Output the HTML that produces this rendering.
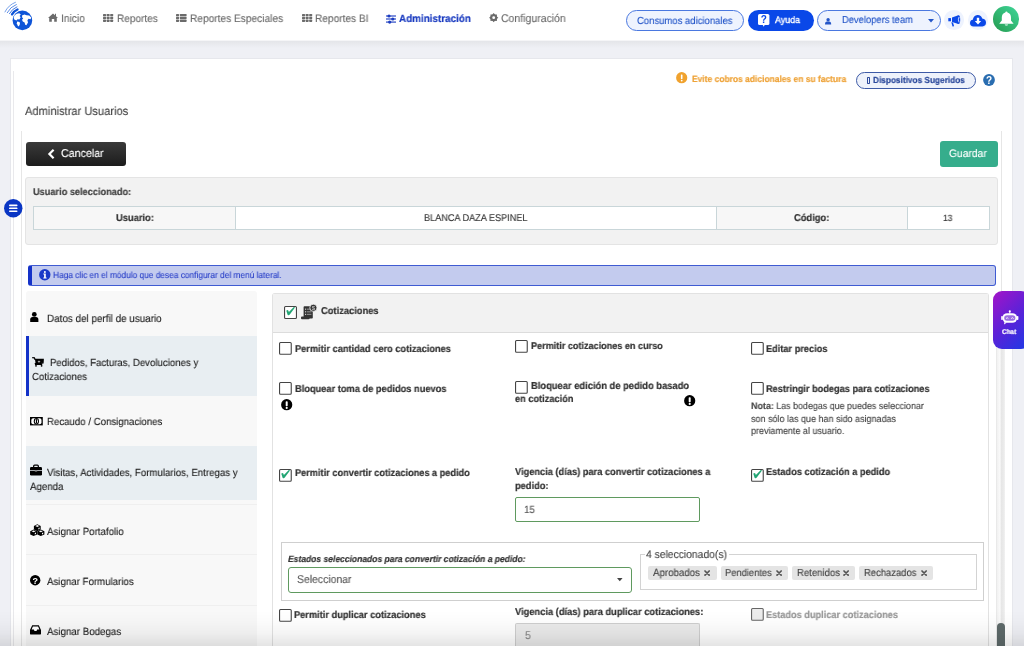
<!DOCTYPE html>
<html><head><meta charset="utf-8"><title>Administrar Usuarios</title>
<style>
html,body{margin:0;padding:0;}
body{width:1024px;height:646px;overflow:hidden;position:relative;background:#eff0f5;font-family:"Liberation Sans",sans-serif;}
.b{position:absolute;display:block;}
svg.b{will-change:transform;overflow:visible;}
.t{position:absolute;white-space:nowrap;line-height:1;transform-origin:0 0;text-rendering:geometricPrecision;will-change:transform;}
</style></head><body>
<div class="b" style="left:0px;top:0px;width:1024px;height:40px;background:#fff;"></div>
<div class="b" style="left:0px;top:40px;width:1024px;height:1px;background:#f5f5f7;"></div>
<div class="b" style="left:0px;top:41px;width:1024px;height:7px;background:linear-gradient(#e4e5e9,#eff0f5);"></div>
<svg class="b" style="left:2px;top:1px;" width="34" height="32" viewBox="0 0 34 32">
<circle cx="20.4" cy="19.4" r="9.8" fill="#0f55d8"/>
<path d="M12.4 14.6 L14.6 12.8 L17.2 12.2 L18.8 13.4 L17.6 15 L18.6 16.2 L17.4 18.4 L15.6 18.2 L14.4 19.6 L12.2 18.4 L11.6 16.4z" fill="#fff"/>
<path d="M15.2 20.6 L17.6 21 L18 23 L16.8 25.6 L15.6 24.4 L14.8 22.2z" fill="#fff"/>
<path d="M20 14.4 L22.4 13.4 L24.6 14.2 L27.2 14.4 L29.2 16.4 L28.6 18.2 L26.6 17.8 L25.4 19.2 L26 21.6 L24.4 24.2 L23.2 23.8 L22.6 21.4 L20.8 20.6 L20 18.8 L21.2 17.4 L20.2 16.4z" fill="#fff"/>
<path d="M10.01 13.40 A 12 12 0 0 1 15.52 8.44" stroke="#0f55d8" stroke-width="2.3" fill="none" stroke-linecap="round"/>
<path d="M7.51 12.55 A 14.6 14.6 0 0 1 14.93 5.86" stroke="#2a68dc" stroke-width="0.9" fill="none" stroke-linecap="round"/>
<path d="M5.25 11.68 A 17 17 0 0 1 14.31 3.53" stroke="#4a80e2" stroke-width="0.9" fill="none" stroke-linecap="round"/>
<path d="M2.96 10.90 A 19.4 19.4 0 0 1 13.45 1.29" stroke="#6a98e8" stroke-width="0.9" fill="none" stroke-linecap="round"/>
</svg>
<svg class="b" style="left:48px;top:13px;" width="10" height="9" viewBox="0 0 10 9"><path d="M5 0.6 L0 5 L1.2 5 L1.2 8.8 L3.8 8.8 L3.8 6 L6.2 6 L6.2 8.8 L8.8 8.8 L8.8 5 L10 5 L8 3.2 L8 0.8 L7 0.8 L7 2.3 Z" fill="#6b6b6b"/></svg>
<svg class="b" style="left:102.8px;top:13.8px;" width="11" height="8.2" viewBox="0 0 11 8.2"><rect x="0.0" y="0.0" width="3" height="2.3" rx="0.6" fill="#6b6b6b"/><rect x="3.6" y="0.0" width="3" height="2.3" rx="0.6" fill="#6b6b6b"/><rect x="7.2" y="0.0" width="3" height="2.3" rx="0.6" fill="#6b6b6b"/><rect x="0.0" y="2.8" width="3" height="2.3" rx="0.6" fill="#6b6b6b"/><rect x="3.6" y="2.8" width="3" height="2.3" rx="0.6" fill="#6b6b6b"/><rect x="7.2" y="2.8" width="3" height="2.3" rx="0.6" fill="#6b6b6b"/><rect x="0.0" y="5.6" width="3" height="2.3" rx="0.6" fill="#6b6b6b"/><rect x="3.6" y="5.6" width="3" height="2.3" rx="0.6" fill="#6b6b6b"/><rect x="7.2" y="5.6" width="3" height="2.3" rx="0.6" fill="#6b6b6b"/></svg>
<svg class="b" style="left:301.6px;top:13.8px;" width="11" height="8.2" viewBox="0 0 11 8.2"><rect x="0.0" y="0.0" width="3" height="2.3" rx="0.6" fill="#6b6b6b"/><rect x="3.6" y="0.0" width="3" height="2.3" rx="0.6" fill="#6b6b6b"/><rect x="7.2" y="0.0" width="3" height="2.3" rx="0.6" fill="#6b6b6b"/><rect x="0.0" y="2.8" width="3" height="2.3" rx="0.6" fill="#6b6b6b"/><rect x="3.6" y="2.8" width="3" height="2.3" rx="0.6" fill="#6b6b6b"/><rect x="7.2" y="2.8" width="3" height="2.3" rx="0.6" fill="#6b6b6b"/><rect x="0.0" y="5.6" width="3" height="2.3" rx="0.6" fill="#6b6b6b"/><rect x="3.6" y="5.6" width="3" height="2.3" rx="0.6" fill="#6b6b6b"/><rect x="7.2" y="5.6" width="3" height="2.3" rx="0.6" fill="#6b6b6b"/></svg>
<svg class="b" style="left:176px;top:13.8px;" width="11" height="8.2" viewBox="0 0 11 8.2"><rect x="0" y="0.0" width="3" height="2.3" rx="0.6" fill="#6b6b6b"/><rect x="3.8" y="0.0" width="6.8" height="2.3" rx="0.6" fill="#6b6b6b"/><rect x="0" y="2.8" width="3" height="2.3" rx="0.6" fill="#6b6b6b"/><rect x="3.8" y="2.8" width="6.8" height="2.3" rx="0.6" fill="#6b6b6b"/><rect x="0" y="5.6" width="3" height="2.3" rx="0.6" fill="#6b6b6b"/><rect x="3.8" y="5.6" width="6.8" height="2.3" rx="0.6" fill="#6b6b6b"/></svg>
<svg class="b" style="left:386px;top:14px;" width="10" height="10" viewBox="0 0 10 10">
<rect x="0" y="1.3" width="10" height="1.4" fill="#1b3cc0" opacity="0.8"/><circle cx="3" cy="2" r="1.6" fill="#1b3cc0"/>
<rect x="0" y="4.3" width="10" height="1.4" fill="#1b3cc0" opacity="0.8"/><circle cx="6.8" cy="5" r="1.6" fill="#1b3cc0"/>
<rect x="0" y="7.4" width="10" height="1.4" fill="#1b3cc0" opacity="0.8"/><circle cx="3.7" cy="8.1" r="1.6" fill="#1b3cc0"/>
</svg>
<svg class="b" style="left:488.6px;top:13.3px;" width="9.4" height="9.4" viewBox="0 0 9.4 9.4"><polygon points="4.70,0.10 6.00,1.56 7.95,1.45 7.84,3.40 9.30,4.70 7.84,6.00 7.95,7.95 6.00,7.84 4.70,9.30 3.40,7.84 1.45,7.95 1.56,6.00 0.10,4.70 1.56,3.40 1.45,1.45 3.40,1.56" fill="#6b6b6b"/><circle cx="4.7" cy="4.7" r="3.3" fill="#6b6b6b"/><circle cx="4.7" cy="4.7" r="1.4" fill="#fff"/></svg>
<div class="t" style="left:60.52px;top:14.00px;font-size:10.99px;color:#6b6b6b;transform:scaleX(0.9346);-webkit-text-stroke:0.12px #6b6b6b;">Inicio</div>
<div class="t" style="left:116.63px;top:14.00px;font-size:10.77px;color:#6b6b6b;transform:scaleX(0.9346);-webkit-text-stroke:0.12px #6b6b6b;">Reportes</div>
<div class="t" style="left:189.62px;top:14.00px;font-size:10.87px;color:#6b6b6b;transform:scaleX(0.9346);-webkit-text-stroke:0.12px #6b6b6b;">Reportes Especiales</div>
<div class="t" style="left:315.42px;top:14.00px;font-size:10.85px;color:#6b6b6b;transform:scaleX(0.9346);-webkit-text-stroke:0.12px #6b6b6b;">Reportes BI</div>
<div class="t" style="left:398.64px;top:14.00px;font-size:10.57px;color:#1b3cc0;transform:scaleX(0.9346);font-weight:700;-webkit-text-stroke:0.2px #1b3cc0;">Administración</div>
<div class="t" style="left:500.65px;top:14.00px;font-size:11.24px;color:#6b6b6b;transform:scaleX(0.9346);-webkit-text-stroke:0.12px #6b6b6b;">Configuración</div>
<div class="b" style="left:626px;top:10px;width:117.5px;height:21px;border:1px solid #4a78e0;background:#eef3fe;border-radius:11px;box-sizing:border-box;"></div>
<div class="t" style="left:636.69px;top:17.00px;font-size:10.16px;color:#2456c8;transform:scaleX(0.9346);-webkit-text-stroke:0.12px #2456c8;">Consumos adicionales</div>
<div class="b" style="left:748px;top:9.8px;width:66px;height:20.8px;background:#0a48e8;border-radius:11px;"></div>
<svg class="b" style="left:758px;top:14px;" width="11.5" height="13" viewBox="0 0 11.5 13"><rect x="0" y="0" width="11.4" height="11" rx="1.6" fill="#fff"/><path d="M4.6 10.8 L5.7 12.8 L6.8 10.8z" fill="#fff"/><text x="5.7" y="9" font-family="Liberation Sans" font-weight="700" font-size="10" text-anchor="middle" fill="#0a48e8">?</text></svg>
<div class="t" style="left:774.60px;top:16.00px;font-size:9.47px;color:#fff;transform:scaleX(0.9346);-webkit-text-stroke:0.12px #fff;-webkit-text-stroke:0.35px #fff;">Ayuda</div>
<div class="b" style="left:817.3px;top:9.5px;width:124.20000000000005px;height:21.5px;border:1px solid #4a78e0;background:#eef3fe;border-radius:11px;box-sizing:border-box;"></div>
<svg class="b" style="left:825px;top:17.5px;" width="6.2" height="6.4" viewBox="0 0 6.2 6.4"><circle cx="3.1" cy="1.7" r="1.7" fill="#2456c8"/><path d="M0 6.4 Q0 3.6 2 3.6 L4.2 3.6 Q6.2 3.6 6.2 6.4z" fill="#2456c8"/></svg>
<div class="t" style="left:842.07px;top:16.00px;font-size:10.04px;color:#2456c8;transform:scaleX(0.9346);-webkit-text-stroke:0.12px #2456c8;">Developers team</div>
<svg class="b" style="left:928px;top:19px;" width="6" height="4" viewBox="0 0 6 4"><path d="M0 0 L6 0 L3 3.4z" fill="#2456c8"/></svg>
<div class="b" style="left:944.2px;top:10.2px;width:19.59999999999991px;height:19.6px;background:#eef3fe;border-radius:50%;"></div>
<svg class="b" style="left:947.8px;top:14.6px;" width="12.4" height="11.6" viewBox="0 0 12.4 11.6"><rect x="0.3" y="3.1" width="2.7" height="3.2" fill="#0a48e8"/><path d="M4 2.6 L10.4 0.3 L10.4 9.1 L4 6.9z" fill="#0a48e8"/><ellipse cx="10.6" cy="4.7" rx="1.6" ry="4.4" fill="#0a48e8"/><path d="M11.1 2 Q9.7 4.7 11.1 7.4" stroke="#fff" stroke-width="0.8" fill="none"/><path d="M3.3 7.3 L5 7.6 L6.1 11.2 L4.5 11.4z" fill="#0a48e8"/></svg>
<div class="b" style="left:967.8px;top:9.8px;width:20.600000000000023px;height:20.599999999999998px;background:#eef3fe;border-radius:50%;"></div>
<svg class="b" style="left:970.4px;top:13.6px;" width="16" height="12.6" viewBox="0 0 16 12.6"><path d="M3.6 12.4 Q0 12.4 0 9 Q0 6.2 2.8 5.8 Q3.4 1.6 7.4 1 Q11.2 0.8 12.2 4.6 Q16 5 16 8.6 Q16 12.4 12.4 12.4z" fill="#0a48e8"/><path d="M6.8 3.8 L9.2 3.8 L9.2 7 L11.2 7 L8 10.6 L4.8 7 L6.8 7z" fill="#fff"/></svg>
<div class="b" style="left:992.5px;top:6px;width:26.700000000000045px;height:26px;background:linear-gradient(45deg,#259a4e,#3fd79a);border-radius:50%;"></div>
<svg class="b" style="left:998.6px;top:10.8px;" width="14.8" height="15.6" viewBox="0 0 14.8 15.6"><path d="M7.4 0.4 Q8.5 0.4 8.5 1.5 Q12 2.4 12 6.6 L12 9.6 L14.6 12.8 L0.2 12.8 L2.8 9.6 L2.8 6.6 Q2.8 2.4 6.3 1.5 Q6.3 0.4 7.4 0.4z" fill="#fff"/><path d="M5.6 13.4 Q7.4 15.8 9.2 13.4z" fill="#fff"/></svg>
<div class="b" style="left:10px;top:58px;width:1003px;height:588px;background:#fff;border:1px solid #e6e7ec;box-sizing:border-box;border-bottom:none;"></div>
<div class="b" style="left:13px;top:71px;width:1px;height:575px;background:#e9e9ec;"></div>
<div class="b" style="left:21px;top:131px;width:1px;height:515px;background:#e6e6e6;"></div>
<div class="b" style="left:1001px;top:131px;width:1px;height:515px;background:#e6e6e6;"></div>
<svg class="b" style="left:676px;top:72px;" width="11.4" height="11.4" viewBox="0 0 11.4 11.4"><circle cx="5.7" cy="5.7" r="5.6" fill="#f0a22e"/><rect x="4.9" y="2.4" width="1.6" height="4.6" rx="0.6" fill="#fff"/><circle cx="5.7" cy="8.6" r="0.9" fill="#fff"/></svg>
<div class="t" style="left:692.27px;top:75.00px;font-size:9.06px;color:#eea236;transform:scaleX(0.9346);font-weight:700;-webkit-text-stroke:0.2px #eea236;">Evite cobros adicionales en su factura</div>
<div class="b" style="left:856px;top:72px;width:120px;height:17.400000000000006px;border:1px solid #3d5aa6;background:#eef2fb;border-radius:9px;box-sizing:border-box;"></div>
<div class="b" style="left:866.5px;top:77px;width:3.5px;height:6.599999999999994px;border:0.9px solid #2c4a9c;border-radius:0.8px;box-sizing:border-box;"></div>
<div class="t" style="left:872.59px;top:76.00px;font-size:8.85px;color:#2c4a9c;transform:scaleX(0.9346);font-weight:700;-webkit-text-stroke:0.2px #2c4a9c;">Dispositivos Sugeridos</div>
<svg class="b" style="left:982.8px;top:74.2px;" width="12" height="12" viewBox="0 0 12 12"><circle cx="6" cy="6" r="5.9" fill="#2a6db0"/><text x="6" y="9.6" font-family="Liberation Sans" font-weight="700" font-size="10" text-anchor="middle" fill="#fff">?</text></svg>
<div class="t" style="left:24.73px;top:106.00px;font-size:11.91px;color:#444;transform:scaleX(0.9346);-webkit-text-stroke:0.12px #444;">Administrar Usuarios</div>
<div class="b" style="left:25.5px;top:142px;width:100.0px;height:24px;background:linear-gradient(#3a3a3a,#1c1c1c);border-radius:3px;"></div>
<svg class="b" style="left:47.5px;top:149px;" width="7" height="10" viewBox="0 0 7 10"><path d="M5.6 0.8 L1.4 5 L5.6 9.2" stroke="#fff" stroke-width="2.2" fill="none"/></svg>
<div class="t" style="left:61.35px;top:149.00px;font-size:11.41px;color:#fff;transform:scaleX(0.9346);-webkit-text-stroke:0.12px #fff;">Cancelar</div>
<div class="b" style="left:940px;top:141px;width:58px;height:26px;background:#36ad8c;border-radius:3px;"></div>
<div class="t" style="left:949.36px;top:149.00px;font-size:11.02px;color:#fff;transform:scaleX(0.9346);-webkit-text-stroke:0.12px #fff;">Guardar</div>
<div class="b" style="left:25px;top:177px;width:973px;height:68px;background:#f2f2f2;border:1px solid #e4e4e4;border-radius:3px;box-sizing:border-box;"></div>
<div class="t" style="left:33.14px;top:188.00px;font-size:9.86px;color:#444;transform:scaleX(0.9346);font-weight:700;-webkit-text-stroke:0.2px #444;">Usuario seleccionado:</div>
<div class="b" style="left:33px;top:206px;width:957px;height:24px;background:#fff;border:1px solid #c9d6d9;box-sizing:border-box;"></div>
<div class="b" style="left:34px;top:207px;width:201px;height:22px;background:#f7f7f7;"></div>
<div class="b" style="left:235px;top:207px;width:1px;height:22px;background:#c9d6d9;"></div>
<div class="b" style="left:717px;top:207px;width:190px;height:22px;background:#f7f7f7;"></div>
<div class="b" style="left:716px;top:207px;width:1px;height:22px;background:#c9d6d9;"></div>
<div class="b" style="left:907px;top:207px;width:1px;height:22px;background:#c9d6d9;"></div>
<div class="t" style="left:115.73px;top:214.00px;font-size:10.00px;color:#333;transform:scaleX(0.9346);font-weight:700;-webkit-text-stroke:0.2px #333;">Usuario:</div>
<div class="t" style="left:423.88px;top:214.00px;font-size:9.78px;color:#333;transform:scaleX(0.9346);-webkit-text-stroke:0.12px #333;">BLANCA DAZA ESPINEL</div>
<div class="t" style="left:794.00px;top:214.00px;font-size:9.99px;color:#333;transform:scaleX(0.9346);font-weight:700;-webkit-text-stroke:0.2px #333;">Código:</div>
<div class="t" style="left:942.85px;top:214.00px;font-size:9.04px;color:#333;transform:scaleX(0.9346);-webkit-text-stroke:0.12px #333;">13</div>
<svg class="b" style="left:4px;top:199px;" width="18.5" height="18.5" viewBox="0 0 18.5 18.5"><circle cx="9.25" cy="9.25" r="9.2" fill="#0a36c4"/><rect x="5" y="5.6" width="8.5" height="1.6" rx="0.7" fill="#fff"/><rect x="5" y="8.5" width="8.5" height="1.6" rx="0.7" fill="#fff"/><rect x="5" y="11.4" width="8.5" height="1.6" rx="0.7" fill="#fff"/></svg>
<div class="b" style="left:28px;top:265px;width:968px;height:21px;background:#c3cbee;border:1px solid #3f5bd2;border-left:4px solid #1532c8;border-radius:3px;box-sizing:border-box;"></div>
<svg class="b" style="left:38.8px;top:269.4px;" width="11.6" height="11.6" viewBox="0 0 11.6 11.6"><circle cx="5.8" cy="5.8" r="5.7" fill="#1a3ac8"/><circle cx="5.9" cy="2.9" r="1" fill="#fff"/><path d="M4.3 4.6 L6.8 4.6 L6.8 8.4 L7.6 8.4 L7.6 9.4 L4.3 9.4 L4.3 8.4 L5.1 8.4 L5.1 5.6 L4.3 5.6z" fill="#fff"/></svg>
<div class="t" style="left:52.68px;top:271.00px;font-size:8.92px;color:#2a40c8;transform:scaleX(0.9346);-webkit-text-stroke:0.12px #2a40c8;">Haga clic en el módulo que desea configurar del menú lateral.</div>
<div class="b" style="left:25.8px;top:291px;width:231.2px;height:355px;background:#f8f8f8;border-radius:3px 3px 0 0;"></div>
<div class="b" style="left:25.8px;top:336px;width:231.2px;height:60px;background:#e8eef2;"></div>
<div class="b" style="left:26px;top:336px;width:3px;height:60px;background:#1432c8;"></div>
<div class="b" style="left:25.8px;top:446px;width:231.2px;height:53.5px;background:#e8eef2;"></div>
<div class="b" style="left:25.8px;top:503.5px;width:231.2px;height:1.0px;background:#efefef;"></div>
<div class="b" style="left:25.8px;top:554px;width:231.2px;height:1px;background:#efefef;"></div>
<div class="b" style="left:25.8px;top:605px;width:231.2px;height:1px;background:#efefef;"></div>
<svg class="b" style="left:30px;top:311.8px;" width="8.6" height="10" viewBox="0 0 8.6 10"><circle cx="4.3" cy="2.4" r="2.4" fill="#000"/><path d="M0.2 10 L0.2 7.6 Q0.2 5 2.6 5 L6 5 Q8.4 5 8.4 7.6 L8.4 10z" fill="#000"/></svg>
<div class="t" style="left:47.24px;top:314.00px;font-size:10.57px;color:#1c1c1c;transform:scaleX(0.9346);-webkit-text-stroke:0.12px #1c1c1c;">Datos del perfil de usuario</div>
<svg class="b" style="left:32.3px;top:357px;" width="11.4" height="9.6" viewBox="0 0 11.4 9.6"><path d="M0.2 0.6 L2.4 0.8 L3 2.4 L11.2 2.4 L11 5.8 L3.4 6.6 L3.6 7.4 L10.2 7.4" stroke="#000" stroke-width="1.3" fill="none"/><path d="M3 2.4 L11.2 2.4 L11 5.8 L3.6 6.6z" fill="#000"/><circle cx="4" cy="8.8" r="0.9" fill="#000"/><circle cx="9.6" cy="8.8" r="0.9" fill="#000"/><path d="M7 3.2 L7.5 4.4 L8.7 4.6 L7.5 4.9 L7 6 L6.5 4.9 L5.3 4.6 L6.5 4.4z" fill="#fff"/></svg>
<div class="t" style="left:49.66px;top:359.00px;font-size:10.30px;color:#1c1c1c;transform:scaleX(0.9346);-webkit-text-stroke:0.12px #1c1c1c;">Pedidos, Facturas, Devoluciones y</div>
<div class="t" style="left:32.38px;top:373.00px;font-size:10.30px;color:#1c1c1c;transform:scaleX(0.9346);-webkit-text-stroke:0.12px #1c1c1c;">Cotizaciones</div>
<svg class="b" style="left:30.1px;top:416.5px;" width="12.8" height="8.4" viewBox="0 0 12.8 8.4"><rect x="0" y="0" width="12.8" height="8.4" fill="#000"/><rect x="1.3" y="1.2" width="10.2" height="6" rx="1.8" fill="#fff"/><ellipse cx="6.4" cy="4.2" rx="2.6" ry="3.3" fill="#000"/><ellipse cx="6.4" cy="4.2" rx="1.5" ry="2.3" fill="#fff"/><rect x="5.9" y="2.2" width="1.1" height="4" fill="#000"/></svg>
<div class="t" style="left:47.05px;top:418.00px;font-size:10.34px;color:#1c1c1c;transform:scaleX(0.9346);-webkit-text-stroke:0.12px #1c1c1c;">Recaudo / Consignaciones</div>
<svg class="b" style="left:30.1px;top:465px;" width="12" height="10.4" viewBox="0 0 12 10.4"><rect x="3.6" y="0.2" width="4.8" height="2.4" rx="1" stroke="#000" stroke-width="1.2" fill="none"/><rect x="0" y="2" width="12" height="8.4" rx="1.2" fill="#000"/><rect x="0" y="5.2" width="12" height="0.7" fill="#e8eef2"/><rect x="4.8" y="5" width="2.4" height="1.6" fill="#888"/></svg>
<div class="t" style="left:47.46px;top:469.00px;font-size:10.35px;color:#1c1c1c;transform:scaleX(0.9346);-webkit-text-stroke:0.12px #1c1c1c;">Visitas, Actividades, Formularios, Entregas y</div>
<div class="t" style="left:29.94px;top:483.00px;font-size:10.39px;color:#1c1c1c;transform:scaleX(0.9346);-webkit-text-stroke:0.12px #1c1c1c;">Agenda</div>
<svg class="b" style="left:30.1px;top:523.6px;" width="14.6" height="12" viewBox="0 0 14.6 12"><path d="M3.9 1.9 L7.3 0.2 L10.7 1.9 L10.7 5.6 L7.3 7.3 L3.9 5.6z" fill="#000"/><path d="M0.2 7.2 L3.6 5.5 L7.2 7.2 L7.2 10.4 L3.6 12 L0.2 10.4z" fill="#000"/><path d="M7.3 7.2 L10.8 5.5 L14.4 7.2 L14.4 10.4 L10.8 12 L7.3 10.4z" fill="#000"/><path d="M5.3 2 L7.3 1.1 L9.3 2 L7.3 2.9z" fill="#fff"/><path d="M1.6 7.3 L3.6 6.4 L5.6 7.3 L3.6 8.2z" fill="#fff"/><path d="M8.8 7.3 L10.8 6.4 L12.8 7.3 L10.8 8.2z" fill="#fff"/><path d="M8.4 4 L9.6 3.5 L9.6 5 L8.4 5.5z" fill="#fff"/><path d="M4.8 9 L6 8.5 L6 10 L4.8 10.5z" fill="#fff"/><path d="M12 9 L13.2 8.5 L13.2 10 L12 10.5z" fill="#fff"/></svg>
<div class="t" style="left:47.43px;top:528.00px;font-size:10.41px;color:#1c1c1c;transform:scaleX(0.9346);-webkit-text-stroke:0.12px #1c1c1c;">Asignar Portafolio</div>
<svg class="b" style="left:30.1px;top:574.6px;" width="10.4" height="10.4" viewBox="0 0 10.4 10.4"><circle cx="5.2" cy="5.2" r="5.2" fill="#000"/><text x="5.2" y="8.6" font-family="Liberation Sans" font-weight="700" font-size="9" text-anchor="middle" fill="#fff">?</text></svg>
<div class="t" style="left:47.44px;top:578.00px;font-size:10.39px;color:#1c1c1c;transform:scaleX(0.9346);-webkit-text-stroke:0.12px #1c1c1c;">Asignar Formularios</div>
<svg class="b" style="left:30.1px;top:624.8px;" width="11" height="9.6" viewBox="0 0 11 9.6"><path d="M0 5 L2.2 0.2 L8.8 0.2 L11 5 L11 8.4 Q11 9.6 9.8 9.6 L1.2 9.6 Q0 9.6 0 8.4z" fill="#000"/><path d="M2.9 1.5 L8.1 1.5 L9.4 4.6 L7.2 4.6 L6.5 6 L4.5 6 L3.8 4.6 L1.6 4.6z" fill="#fff"/></svg>
<div class="t" style="left:47.43px;top:628.00px;font-size:10.43px;color:#1c1c1c;transform:scaleX(0.9346);-webkit-text-stroke:0.12px #1c1c1c;">Asignar Bodegas</div>
<div class="b" style="left:272px;top:293px;width:717px;height:353px;background:#fff;border:1px solid #e2e2e2;border-bottom:none;border-radius:3px 3px 0 0;box-sizing:border-box;"></div>
<div class="b" style="left:273px;top:294px;width:715px;height:39px;background:#f2f2f2;border-bottom:1px solid #dcdcdc;box-sizing:border-box;"></div>
<svg class="b" style="left:284.3px;top:306px;" width="13" height="13" viewBox="0 0 13 13"><rect x="0.55" y="0.55" width="11.9" height="11.9" rx="1" fill="#fff" stroke="#444" stroke-width="1.1"/><path d="M2.3 4.7 Q3.2 3.5 4.3 4.4 L4.9 6 L9.8 1 Q11 0.6 10.8 1.8 L5.8 8.6 Q4.6 9.9 3.6 8.7 Z" fill="#22a574"/></svg>
<svg class="b" style="left:301px;top:303.5px;" width="16.2" height="15.4" viewBox="0 0 16.2 15.4"><rect x="2.6" y="2.2" width="9.2" height="12.4" rx="0.8" fill="#333"/><rect x="0" y="12.6" width="8.6" height="2.6" rx="1" fill="#333"/><rect x="4" y="4.6" width="1.2" height="1.2" fill="#ccc"/><rect x="6" y="4.6" width="4.4" height="1.2" fill="#888"/><rect x="4" y="7.2" width="1.2" height="1.2" fill="#ccc"/><rect x="6" y="7.2" width="4.4" height="1.2" fill="#888"/><rect x="4" y="9.8" width="1.2" height="1.2" fill="#ccc"/><rect x="6" y="9.8" width="4.4" height="1.2" fill="#888"/><circle cx="12.4" cy="3.8" r="3.6" fill="#333" stroke="#f2f2f2" stroke-width="0.8"/><text x="12.4" y="6" font-family="Liberation Sans" font-size="6" font-weight="700" text-anchor="middle" fill="#bbb">$</text></svg>
<div class="t" style="left:320.70px;top:307.00px;font-size:9.99px;color:#333;transform:scaleX(0.9346);font-weight:700;-webkit-text-stroke:0.2px #333;">Cotizaciones</div>
<svg class="b" style="left:279.2px;top:341.8px;" width="12.8" height="12.8" viewBox="0 0 12.8 12.8"><rect x="0.55" y="0.55" width="11.700000000000001" height="11.700000000000001" rx="1" fill="#fff" stroke="#444" stroke-width="1.1"/></svg>
<div class="t" style="left:294.55px;top:345.00px;font-size:9.92px;color:#333;transform:scaleX(0.9346);font-weight:700;-webkit-text-stroke:0.2px #333;">Permitir cantidad cero cotizaciones</div>
<svg class="b" style="left:515px;top:339.6px;" width="12.8" height="12.8" viewBox="0 0 12.8 12.8"><rect x="0.55" y="0.55" width="11.700000000000001" height="11.700000000000001" rx="1" fill="#fff" stroke="#444" stroke-width="1.1"/></svg>
<div class="t" style="left:530.54px;top:342.00px;font-size:9.73px;color:#333;transform:scaleX(0.9346);font-weight:700;-webkit-text-stroke:0.2px #333;">Permitir cotizaciones en curso</div>
<svg class="b" style="left:750.9px;top:342px;" width="12.8" height="12.8" viewBox="0 0 12.8 12.8"><rect x="0.55" y="0.55" width="11.700000000000001" height="11.700000000000001" rx="1" fill="#fff" stroke="#444" stroke-width="1.1"/></svg>
<div class="t" style="left:765.84px;top:345.00px;font-size:9.85px;color:#333;transform:scaleX(0.9346);font-weight:700;-webkit-text-stroke:0.2px #333;">Editar precios</div>
<svg class="b" style="left:279.2px;top:382px;" width="12.8" height="12.8" viewBox="0 0 12.8 12.8"><rect x="0.55" y="0.55" width="11.700000000000001" height="11.700000000000001" rx="1" fill="#fff" stroke="#444" stroke-width="1.1"/></svg>
<div class="t" style="left:294.54px;top:385.00px;font-size:9.94px;color:#333;transform:scaleX(0.9346);font-weight:700;-webkit-text-stroke:0.2px #333;">Bloquear toma de pedidos nuevos</div>
<svg class="b" style="left:280.6px;top:399.4px;" width="11.4" height="11.4" viewBox="0 0 11.4 11.4"><circle cx="5.7" cy="5.7" r="5.6" fill="#000"/><rect x="4.7" y="2.2" width="2" height="5" rx="0.8" fill="#fff"/><circle cx="5.7" cy="8.9" r="1.05" fill="#fff"/></svg>
<svg class="b" style="left:515px;top:380.6px;" width="12.8" height="12.8" viewBox="0 0 12.8 12.8"><rect x="0.55" y="0.55" width="11.700000000000001" height="11.700000000000001" rx="1" fill="#fff" stroke="#444" stroke-width="1.1"/></svg>
<div class="t" style="left:530.53px;top:382.00px;font-size:10.02px;color:#333;transform:scaleX(0.9346);font-weight:700;-webkit-text-stroke:0.2px #333;">Bloquear edición de pedido basado</div>
<div class="t" style="left:514.94px;top:395.00px;font-size:9.88px;color:#333;transform:scaleX(0.9346);font-weight:700;-webkit-text-stroke:0.2px #333;">en cotización</div>
<svg class="b" style="left:684.4px;top:395px;" width="11.4" height="11.4" viewBox="0 0 11.4 11.4"><circle cx="5.7" cy="5.7" r="5.6" fill="#000"/><rect x="4.7" y="2.2" width="2" height="5" rx="0.8" fill="#fff"/><circle cx="5.7" cy="8.9" r="1.05" fill="#fff"/></svg>
<svg class="b" style="left:750.9px;top:382.2px;" width="12.8" height="12.8" viewBox="0 0 12.8 12.8"><rect x="0.55" y="0.55" width="11.700000000000001" height="11.700000000000001" rx="1" fill="#fff" stroke="#444" stroke-width="1.1"/></svg>
<div class="t" style="left:765.85px;top:385.00px;font-size:9.86px;color:#333;transform:scaleX(0.9346);font-weight:700;-webkit-text-stroke:0.2px #333;">Restringir bodegas para cotizaciones</div>
<div class="t" style="left:750.65px;top:402.00px;font-size:9.54px;color:#444;transform:scaleX(0.9346);-webkit-text-stroke:0.12px #444;"><b>Nota:</b> Las bodegas que puedes seleccionar</div>
<div class="t" style="left:750.68px;top:415.00px;font-size:9.63px;color:#444;transform:scaleX(0.9346);-webkit-text-stroke:0.12px #444;">son sólo las que han sido asignadas</div>
<div class="t" style="left:750.74px;top:427.00px;font-size:9.62px;color:#444;transform:scaleX(0.9346);-webkit-text-stroke:0.12px #444;">previamente al usuario.</div>
<svg class="b" style="left:279.2px;top:468.6px;" width="12.8" height="12.8" viewBox="0 0 12.8 12.8"><rect x="0.55" y="0.55" width="11.700000000000001" height="11.700000000000001" rx="1" fill="#fff" stroke="#444" stroke-width="1.1"/><path d="M2.3 4.7 Q3.2 3.5 4.3 4.4 L4.9 6 L9.8 1 Q11 0.6 10.8 1.8 L5.8 8.6 Q4.6 9.9 3.6 8.7 Z" fill="#22a574"/></svg>
<div class="t" style="left:294.75px;top:469.00px;font-size:9.86px;color:#333;transform:scaleX(0.9346);font-weight:700;-webkit-text-stroke:0.2px #333;">Permitir convertir cotizaciones a pedido</div>
<div class="t" style="left:514.99px;top:468.00px;font-size:9.91px;color:#333;transform:scaleX(0.9346);font-weight:700;-webkit-text-stroke:0.2px #333;">Vigencia (días) para convertir cotizaciones a</div>
<div class="t" style="left:515.03px;top:482.00px;font-size:9.94px;color:#333;transform:scaleX(0.9346);font-weight:700;-webkit-text-stroke:0.2px #333;">pedido:</div>
<div class="b" style="left:515.3px;top:497.3px;width:184.70000000000005px;height:24.999999999999943px;border:1px solid #5f9a5f;border-radius:2px;box-sizing:border-box;background:#fff;"></div>
<div class="t" style="left:524.38px;top:506.00px;font-size:10.46px;color:#555;transform:scaleX(0.9346);-webkit-text-stroke:0.12px #555;">15</div>
<svg class="b" style="left:750.7px;top:468.6px;" width="12.8" height="12.8" viewBox="0 0 12.8 12.8"><rect x="0.55" y="0.55" width="11.700000000000001" height="11.700000000000001" rx="1" fill="#fff" stroke="#444" stroke-width="1.1"/><path d="M2.3 4.7 Q3.2 3.5 4.3 4.4 L4.9 6 L9.8 1 Q11 0.6 10.8 1.8 L5.8 8.6 Q4.6 9.9 3.6 8.7 Z" fill="#22a574"/></svg>
<div class="t" style="left:766.14px;top:468.00px;font-size:9.88px;color:#333;transform:scaleX(0.9346);font-weight:700;-webkit-text-stroke:0.2px #333;">Estados cotización a pedido</div>
<div class="b" style="left:281.2px;top:542.4px;width:702.5px;height:58.200000000000045px;border:1px solid #cfcfcf;box-sizing:border-box;"></div>
<div class="t" style="left:288.00px;top:555.00px;font-size:9.12px;color:#333;transform:scaleX(0.9346);font-weight:700;-webkit-text-stroke:0.2px #333;font-style:italic;">Estados seleccionados para convertir cotización a pedido:</div>
<div class="b" style="left:287.7px;top:567.2px;width:343.90000000000003px;height:25.399999999999977px;border:1px solid #5f9a5f;border-radius:3px;box-sizing:border-box;background:#fff;"></div>
<div class="t" style="left:297.06px;top:575.00px;font-size:11.16px;color:#555;transform:scaleX(0.9346);-webkit-text-stroke:0.12px #555;">Seleccionar</div>
<svg class="b" style="left:617px;top:578.4px;" width="5.6" height="3.4" viewBox="0 0 5.6 3.4"><path d="M0 0 L5.6 0 L2.8 3.2z" fill="#444"/></svg>
<div class="b" style="left:640.3px;top:553.8px;width:336.70000000000005px;height:36.5px;border:1px solid #d3d3d3;box-sizing:border-box;"></div>
<div class="b" style="left:645px;top:548px;width:84px;height:10px;background:#fff;"></div>
<div class="t" style="left:646.34px;top:550.00px;font-size:11.05px;color:#444;transform:scaleX(0.9346);-webkit-text-stroke:0.12px #444;">4 seleccionado(s)</div>
<div class="b" style="left:648.1px;top:566.2px;width:68.5px;height:14.099999999999909px;background:#e4e4e4;border-radius:2px;"></div><div class="t" style="left:653.03px;top:569.00px;font-size:10.38px;color:#444;transform:scaleX(0.9346);-webkit-text-stroke:0.12px #444;">Aprobados</div><svg class="b" style="left:704.4px;top:570.4px;" width="6.2" height="6.2" viewBox="0 0 6.2 6.2"><path d="M1 1 L5.2 5.2 M5.2 1 L1 5.2" stroke="#555" stroke-width="1.7" stroke-linecap="round"/></svg>
<div class="b" style="left:720.5px;top:566.2px;width:67.89999999999998px;height:14.099999999999909px;background:#e4e4e4;border-radius:2px;"></div><div class="t" style="left:725.27px;top:569.00px;font-size:10.01px;color:#444;transform:scaleX(0.9346);-webkit-text-stroke:0.12px #444;">Pendientes</div><svg class="b" style="left:776.1999999999999px;top:570.4px;" width="6.2" height="6.2" viewBox="0 0 6.2 6.2"><path d="M1 1 L5.2 5.2 M5.2 1 L1 5.2" stroke="#555" stroke-width="1.7" stroke-linecap="round"/></svg>
<div class="b" style="left:792.3px;top:566.2px;width:63.200000000000045px;height:14.099999999999909px;background:#e4e4e4;border-radius:2px;"></div><div class="t" style="left:797.07px;top:569.00px;font-size:10.23px;color:#444;transform:scaleX(0.9346);-webkit-text-stroke:0.12px #444;">Retenidos</div><svg class="b" style="left:843.3px;top:570.4px;" width="6.2" height="6.2" viewBox="0 0 6.2 6.2"><path d="M1 1 L5.2 5.2 M5.2 1 L1 5.2" stroke="#555" stroke-width="1.7" stroke-linecap="round"/></svg>
<div class="b" style="left:859px;top:566.2px;width:73.79999999999995px;height:14.099999999999909px;background:#e4e4e4;border-radius:2px;"></div><div class="t" style="left:864.17px;top:569.00px;font-size:10.08px;color:#444;transform:scaleX(0.9346);-webkit-text-stroke:0.12px #444;">Rechazados</div><svg class="b" style="left:920.5999999999999px;top:570.4px;" width="6.2" height="6.2" viewBox="0 0 6.2 6.2"><path d="M1 1 L5.2 5.2 M5.2 1 L1 5.2" stroke="#555" stroke-width="1.7" stroke-linecap="round"/></svg>
<svg class="b" style="left:279.2px;top:608.5px;" width="12.8" height="12.8" viewBox="0 0 12.8 12.8"><rect x="0.55" y="0.55" width="11.700000000000001" height="11.700000000000001" rx="1" fill="#fff" stroke="#444" stroke-width="1.1"/></svg>
<div class="t" style="left:294.15px;top:611.00px;font-size:9.92px;color:#333;transform:scaleX(0.9346);font-weight:700;-webkit-text-stroke:0.2px #333;">Permitir duplicar cotizaciones</div>
<div class="t" style="left:515.00px;top:608.00px;font-size:9.97px;color:#333;transform:scaleX(0.9346);font-weight:700;-webkit-text-stroke:0.2px #333;">Vigencia (días) para duplicar cotizaciones:</div>
<div class="b" style="left:515.3px;top:623px;width:184.70000000000005px;height:23px;background:#ebebeb;border:1px solid #cfcfcf;border-bottom:none;border-radius:2px 2px 0 0;box-sizing:border-box;"></div>
<div class="t" style="left:524.69px;top:631.00px;font-size:11.32px;color:#888;transform:scaleX(0.9346);-webkit-text-stroke:0.12px #888;">5</div>
<svg class="b" style="left:751px;top:608.4px;" width="12.8" height="12.8" viewBox="0 0 12.8 12.8"><rect x="0.55" y="0.55" width="11.700000000000001" height="11.700000000000001" rx="1" fill="#ececec" stroke="#666" stroke-width="1.1"/></svg>
<div class="t" style="left:766.14px;top:611.00px;font-size:9.86px;color:#999;transform:scaleX(0.9346);font-weight:700;-webkit-text-stroke:0.2px #999;">Estados duplicar cotizaciones</div>
<div class="b" style="left:996px;top:300px;width:9px;height:346px;background:linear-gradient(90deg,#e4e4e4 0,#f2f2f2 15%,#fafafa 45%,#e6e6e6 58%,#ececec 90%,#f4f4f4 100%);"></div>
<div class="b" style="left:996.5px;top:623px;width:8.0px;height:37px;background:#5e6a6a;border-radius:4px;"></div>
<div class="b" style="left:993px;top:290.6px;width:37px;height:58.799999999999955px;background:linear-gradient(135deg,#a414c8 0%,#5a22d8 50%,#1a3ae6 100%);border-radius:9px;"></div>
<svg class="b" style="left:1000.8px;top:310.2px;" width="17.6" height="14.6" viewBox="0 0 17.6 14.6"><circle cx="8.8" cy="1.3" r="1.1" fill="#fff"/><rect x="8.3" y="1.8" width="1" height="1.8" fill="#fff"/><rect x="0.2" y="6" width="1.6" height="4" rx="0.7" fill="#fff"/><rect x="15.8" y="6" width="1.6" height="4" rx="0.7" fill="#fff"/><rect x="1.4" y="3.2" width="14.8" height="9.6" rx="4.8" fill="#fff"/><rect x="3.2" y="5.2" width="11.2" height="5.6" rx="2.8" fill="#9b6fe2"/><path d="M5 8.6 Q6.2 6.8 7.4 8.6 M10.2 8.6 Q11.4 6.8 12.6 8.6" stroke="#fff" stroke-width="0.9" fill="none"/><path d="M3.4 12 L3 14.4 L6 12.4z" fill="#fff"/></svg>
<div class="t" style="left:1001.78px;top:330.00px;font-size:6.84px;color:#fff;transform:scaleX(0.9346);font-weight:700;-webkit-text-stroke:0.2px #fff;">Chat</div>
<div class="b" style="left:0px;top:610px;width:1024px;height:36px;background:linear-gradient(rgba(0,0,0,0) 0%,rgba(0,0,0,0.015) 35%,rgba(0,0,0,0.045) 65%,rgba(0,0,0,0.08) 85%,rgba(0,0,0,0.105) 100%);pointer-events:none;"></div>
</body></html>
